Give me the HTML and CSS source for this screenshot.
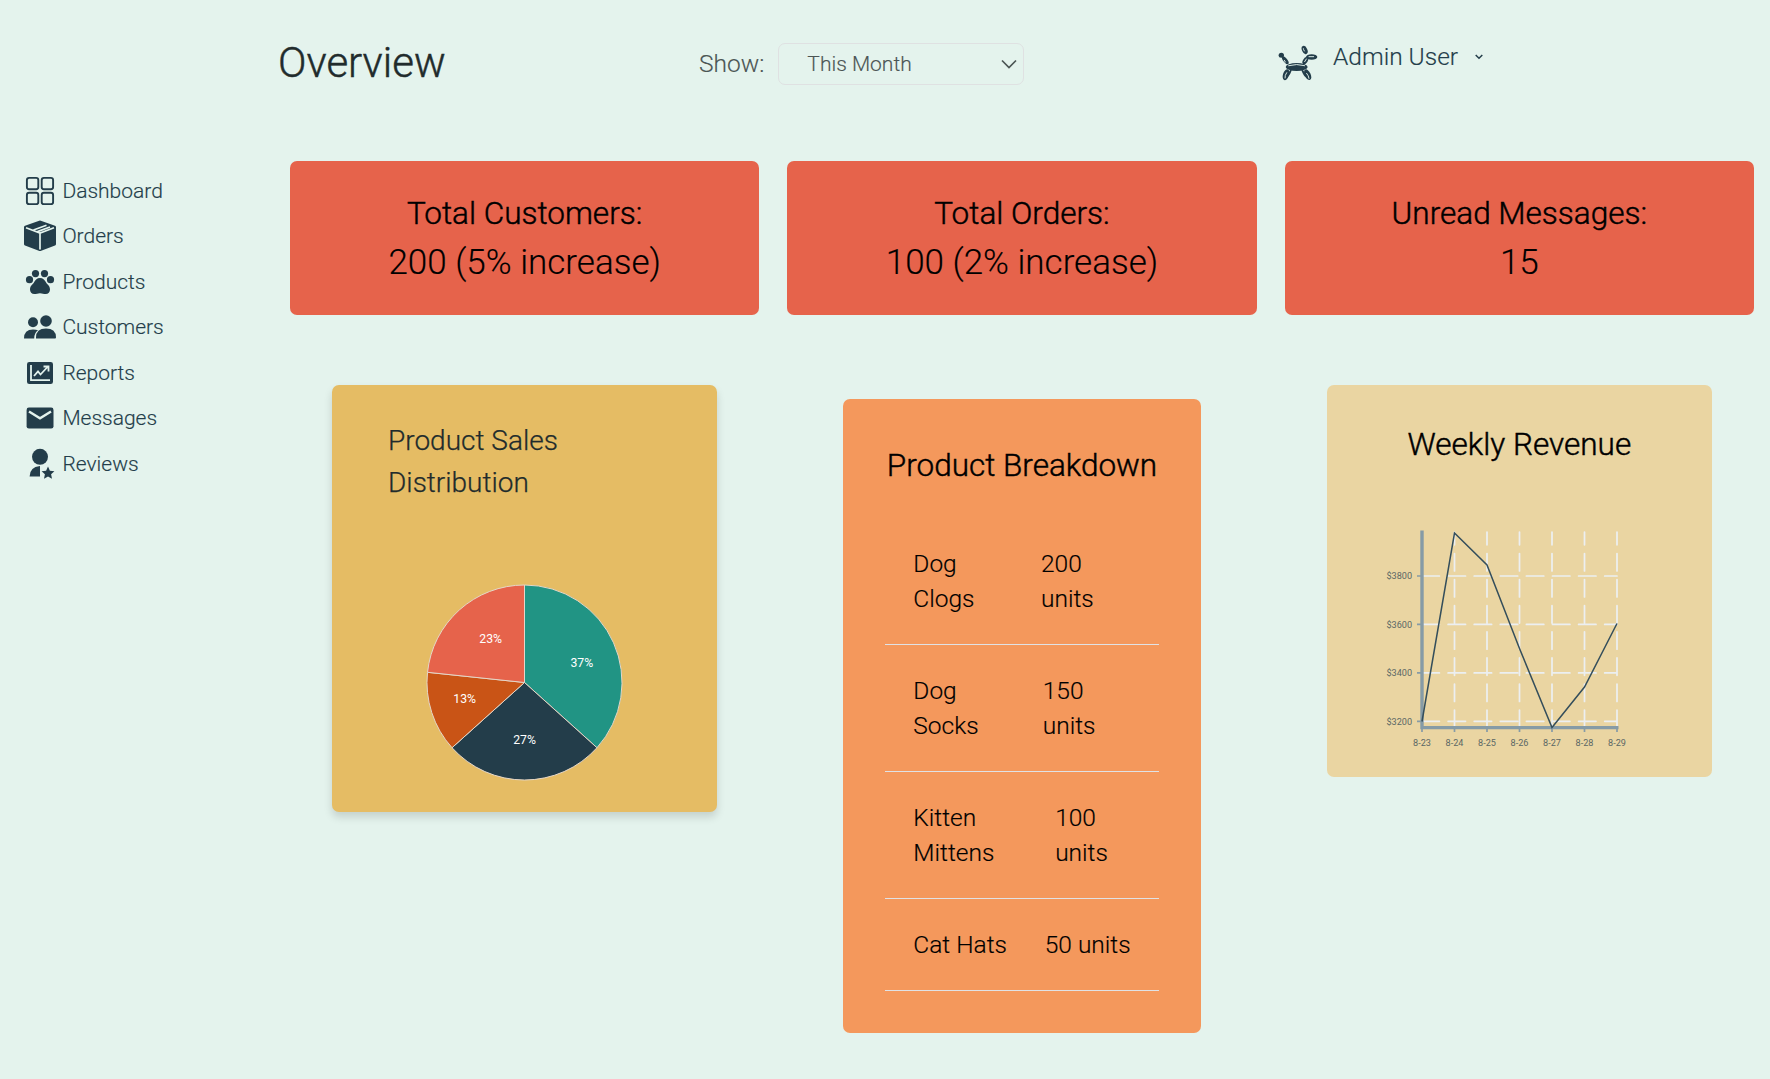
FILE: index.html
```html
<!DOCTYPE html>
<html lang="en">
<head>
<meta charset="utf-8">
<title>Overview</title>
<link rel="stylesheet" href="styles.css">
</head>
<body>
<header class="topbar">
  <h1 class="page-title">Overview</h1>
  <div class="filter">
    <span class="filter-label">Show:</span>
    <div class="select">
      <span>This Month</span>
      <svg class="select-arrow" viewBox="0 0 18 12"><path d="M2 2.5l7 7 7-7"/></svg>
    </div>
  </div>
  <div class="user">
    <svg class="dog" viewBox="24 30 120 108">
      <g class="solid">
        <ellipse cx="80" cy="96" rx="33" ry="12"/>
        <ellipse cx="48" cy="119" rx="9" ry="17" transform="rotate(18 48 119)"/>
        <ellipse cx="113" cy="119" rx="9" ry="17" transform="rotate(-25 113 119)"/>
        <ellipse cx="59" cy="113" rx="3" ry="13" transform="rotate(28 59 113)"/>
        <ellipse cx="101" cy="114" rx="3" ry="13" transform="rotate(-28 101 114)"/>
        <ellipse cx="125" cy="66" rx="17" ry="8.500"/>
        <ellipse cx="104" cy="45" rx="8" ry="13" transform="rotate(-24 104 45)"/>
        <ellipse cx="106" cy="77" rx="7" ry="12" transform="rotate(32 106 77)"/>
        <ellipse cx="34" cy="61" rx="8" ry="7.500"/>
        <ellipse cx="46" cy="76" rx="6" ry="14" transform="rotate(-38 46 76)"/>
      </g>
      <g class="shine">
        <path d="M56 92q24-7 48 0M45 129q-1-8 5-16M117 130q-1-8-7-15M117 65h14M103 48q-3-4-3-7M104 80l5-8M46 81l-3-5"/>
      </g>
    </svg>
    <span class="user-name">Admin User</span>
    <svg class="user-arrow" viewBox="0 0 10 8"><path d="M1.7 2l3.3 3.3L8.3 2"/></svg>
  </div>
</header>
<div class="body">
  <nav class="sidebar">
    <a class="nav-item"><svg class="icon outline" viewBox="0 0 32 32"><rect x="2.9" y="2.9" width="11.4" height="11.4" rx="2.2"/><rect x="17.7" y="2.9" width="11.4" height="11.4" rx="2.2"/><rect x="2.9" y="17.7" width="11.4" height="11.4" rx="2.2"/><rect x="17.7" y="17.7" width="11.4" height="11.4" rx="2.2"/></svg>Dashboard</a>
    <a class="nav-item"><svg class="icon" viewBox="0 0 32 32"><path d="M16 .6q.7 0 1.5.3L31 5.7q1 .4 1 1.5V24q0 1-1 1.5l-13.800 5.200q-1.200.5-2.400 0L1 25.500Q0 25 0 24V7.200Q0 6.100 1 5.700L14.500.9Q15.300.6 16 .6z"/><path class="cut" d="M2 7.800L16 13L30 7.800M16 13v16.500M9.500 10L22.500 5.200M13.500 11.600L26 7"/></svg>Orders</a>
    <a class="nav-item"><svg class="icon" viewBox="0 0 32 32"><circle cx="5.500" cy="13.700" r="3.600"/><circle cx="11.500" cy="7.600" r="3.600"/><circle cx="20.500" cy="7.600" r="3.600"/><circle cx="26.500" cy="13.700" r="3.600"/><path d="M16 12c3 0 4.500 1.700 5.800 4 1.300 2.500 4.200 3.700 4.200 7.500 0 2.700-1.700 4.600-4.300 4.600-2.200 0-3.300-.9-5.700-.9s-3.500.9-5.700.9C7.700 28.100 6 26.200 6 23.500c0-3.800 2.900-5 4.200-7.500 1.300-2.300 2.800-4 5.800-4z"/></svg>Products</a>
    <a class="nav-item"><svg class="icon" viewBox="0 0 32 32"><circle cx="9" cy="11.200" r="5"/><circle cx="22" cy="10" r="5.800"/><path d="M12 27.500v-1q0-9 10-9t10 9q0 1-1 1z"/><path d="M0 27.500q0-9 9-9 3.300 0 5 .8-3.800 2.800-3.800 8.200z"/></svg>Customers</a>
    <a class="nav-item"><svg class="icon" viewBox="0 0 32 32"><rect x="3" y="5" width="26" height="22" rx="2.300"/><path class="cut report" d="M7 8v15.200h19M10 19l4-4.500 2.500 3L23.500 10M19.500 9.500h5v5"/></svg>Reports</a>
    <a class="nav-item"><svg class="icon" viewBox="0 0 32 32"><rect x="2.600" y="5.600" width="26.900" height="21" rx="2.300"/><path class="cut mail" d="M5 9.500l11 6.800 11-6.800"/></svg>Messages</a>
    <a class="nav-item"><svg class="icon" viewBox="0 0 32 32"><circle cx="16" cy="8.800" r="8"/><path d="M16 18v10.600H5.600q0-9.500 10.400-10.600zM24 18.600l1.900 4.100 4.500.5-3.300 3.100.9 4.400-4-2.200-4 2.200.9-4.400-3.300-3.100 4.500-.5z"/></svg>Reviews</a>
  </nav>
  <main class="grid">
    <section class="stat"><h2>Total Customers:</h2><p>200 (5% increase)</p></section>
    <section class="stat"><h2>Total Orders:</h2><p>100 (2% increase)</p></section>
    <section class="stat"><h2>Unread Messages:</h2><p>15</p></section>

    <section class="card sales">
      <h2>Product Sales Distribution</h2>
      <svg class="pie" viewBox="-98.500 -98.500 197 197">
        <path fill="#219484" d="M0 0V-97.500A97.500 97.500 0 0 1 72.460 65.240z"/>
        <path fill="#233d4a" d="M0 0L72.460 65.240A97.500 97.500 0 0 1 -72.460 65.240z"/>
        <path fill="#c95416" d="M0 0L-72.460 65.240A97.500 97.500 0 0 1 -96.970 -10.190z"/>
        <path fill="#e6634b" d="M0 0L-96.970 -10.190A97.500 97.500 0 0 1 0 -97.500z"/>
        <text x="57.300" y="-15.500">37%</text>
        <text x="0" y="61.500">27%</text>
        <text x="-59.800" y="20.500">13%</text>
        <text x="-33.800" y="-39.500">23%</text>
      </svg>
    </section>

    <section class="card breakdown">
      <h2>Product Breakdown</h2>
      <ul>
        <li><span>Dog Clogs</span><span>200 units</span></li>
        <li><span>Dog Socks</span><span>150 units</span></li>
        <li><span>Kitten Mittens</span><span>100 units</span></li>
        <li><span>Cat Hats</span><span>50 units</span></li>
      </ul>
    </section>

    <section class="card revenue">
      <h2>Weekly Revenue</h2>
      <svg class="line" viewBox="1380 520 250 240">
        <path class="gridline" d="M1422 576h195M1422 624.400h195M1422 672.900h195M1422 721.300h195M1454.500 727.500V532M1487 727.500V532M1519.500 727.500V532M1552 727.500V532M1584.500 727.500V532M1617 727.500V532"/>
        <path class="axis" d="M1422 530.500V729.200M1420.300 727.600H1618.500"/>
        <path class="tick" d="M1417 576h5M1417 624.400h5M1417 672.900h5M1417 721.300h5M1422 727v5M1454.500 727v5M1487 727v5M1519.500 727v5M1552 727v5M1584.500 727v5M1617 727v5"/>
        <path class="series" d="M1422 721.500L1454.500 533L1487 565L1519.500 648.500L1552 727.500L1584.500 687L1617 623.500"/>
        <g class="ylab"><text x="1412" y="579.200">$3800</text><text x="1412" y="627.700">$3600</text><text x="1412" y="676.200">$3400</text><text x="1412" y="724.700">$3200</text></g>
        <g class="xlab"><text x="1422" y="745.900">8-23</text><text x="1454.500" y="745.900">8-24</text><text x="1487" y="745.900">8-25</text><text x="1519.500" y="745.900">8-26</text><text x="1552" y="745.900">8-27</text><text x="1584.500" y="745.900">8-28</text><text x="1617" y="745.900">8-29</text></g>
      </svg>
    </section>
  </main>
</div>
</body>
</html>
```
FILE: styles.css
```css
* { box-sizing: border-box; margin: 0; padding: 0; }
html { background: #e4f3ed; }
body { font-family: Roboto, sans-serif; font-weight: 300; color: #000; height: 1079px; overflow: hidden; -webkit-text-stroke: .15px currentColor; }
h1, h2 { font-weight: 300; -webkit-text-stroke: .45px currentColor; }
svg { display: block; flex: none; }
svg text { -webkit-text-stroke: 0; }

.topbar { display: grid; grid-template-columns: 421px 578px 1fr; padding-left: 278px; height: 161px; }
.page-title { font-size: 42px; line-height: 63px; padding-top: 31px; color: #212b2c; }
.filter { display: flex; align-items: center; gap: 14px; height: 42px; margin-top: 43px; color: #4b5554; }
.filter-label { font-size: 24.500px; line-height: 37px; margin-top: -2px; }
.select { display: flex; align-items: center; justify-content: space-between; width: 246px; height: 42px; padding: 0 5px 0 28px; border: 1px solid #dfe1e2; border-radius: 7px; font-size: 21px; }
.select-arrow { width: 18px; height: 12px; fill: none; stroke: #4b5554; stroke-width: 1.700; }
.user { display: flex; color: #233d4a; padding-left: 1px; padding-top: 38px; }
.dog { width: 40px; height: 36px; margin-top: 7px; }
.dog .solid { fill: #233d4a; }
.dog .shine { fill: none; stroke: #e4f3ed; stroke-width: 2.800; stroke-linecap: round; }
.user-name { font-size: 24.500px; line-height: 37px; margin-left: 15px; }
.user-arrow { width: 10px; height: 8px; margin: 15px 0 0 16px; fill: none; stroke: #233d4a; stroke-width: 1.500; }

.body { display: grid; grid-template-columns: 290px 1fr; }
.sidebar { display: flex; flex-direction: column; gap: 13.500px; padding: 13.600px 0 0 24px; }
.nav-item { display: flex; align-items: center; gap: 6.400px; height: 32px; font-size: 21px; color: #233d4a; }
.icon { width: 32px; height: 32px; fill: #233d4a; }
.icon.outline { fill: none; stroke: #233d4a; stroke-width: 1.900; }
.icon .cut { fill: none; stroke: #e4f3ed; stroke-width: 1.700; }
.icon .report { stroke-width: 1.800; }
.icon .mail { stroke-width: 2.400; }

.grid { display: grid; grid-template-columns: repeat(3, 1fr); column-gap: 28px; row-gap: 28px; padding-right: 16px; align-items: start; }
.stat { height: 154px; padding-top: 29px; border-radius: 7px; background: #e6634b; text-align: center; }
.stat h2 { font-size: 31.500px; line-height: 48px; }
.stat p { font-size: 35px; line-height: 50px; }

.card { border-radius: 7px; margin: 42px; }
.sales { height: 427px; padding: 35px 56px 0; background: #e5bc64; box-shadow: 0 5px 8px rgba(0, 0, 0, .14); }
.sales h2 { width: 200px; font-size: 28px; line-height: 42px; color: #212b2c; -webkit-text-stroke-width: .25px; }
.pie { width: 197px; height: 197px; margin: 80px auto 0; }
.pie path { stroke: #e4d6c8; stroke-width: 1; }
.pie text { fill: #fff; font-size: 12.250px; font-weight: 400; text-anchor: middle; }

.breakdown { height: 634px; margin: 56px 56px 0; padding: 43px 42px 0; background: #f4985c; }
.breakdown h2 { font-size: 31.500px; line-height: 48px; text-align: center; white-space: nowrap; }
.breakdown ul { list-style: none; margin-top: 28px; }
.breakdown li { display: flex; justify-content: space-between; gap: 28px; padding: 28px; border-bottom: 1px solid #e0e2e5; font-size: 24.500px; line-height: 35px; }

.revenue { height: 392px; padding: 36px 0 0 53px; background: #ead5a2; }
.revenue h2 { margin-left: -53px; text-align: center; font-size: 31.500px; line-height: 48px; }
.line { width: 250px; height: 240px; margin-top: 51px; }
.line path { fill: none; }
.gridline { stroke: #eceff1; stroke-width: 1.740; stroke-dasharray: 17.400 8.700; stroke-linecap: round; }
.axis { stroke: #869ba6; stroke-width: 3.400; }
.tick { stroke: #869ba6; stroke-width: 1.700; }
.series { stroke: #344e5b; stroke-width: 1.500; }
.line text { fill: #5a6765; font-size: 9.100px; font-weight: 400; }
.ylab { text-anchor: end; }
.xlab { text-anchor: middle; }
```
